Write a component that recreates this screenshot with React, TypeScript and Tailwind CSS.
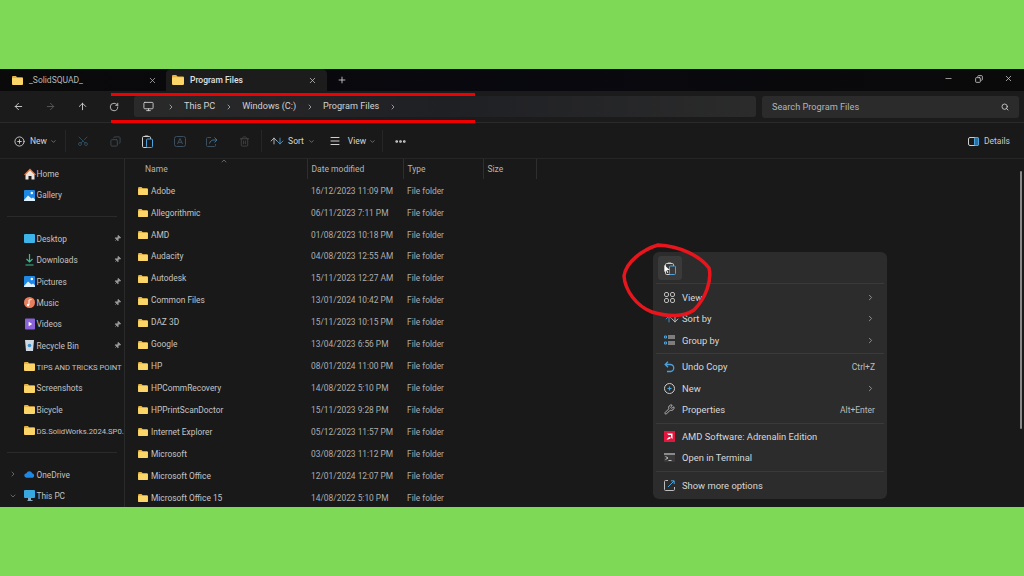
import {
  ArrowDown,
  ArrowLeft,
  ArrowRight,
  ArrowUp,
  ChevronDown,
  ChevronRight,
  ChevronUp,
  CirclePlus,
  Copy,
  Ellipsis,
  Menu,
  Minus,
  Monitor,
  Pin,
  Plus,
  RotateCw,
  Scissors,
  Search,
  Trash2,
  Wrench,
  X,
} from "lucide-react";
import type { ReactNode } from "react";

const files = [
  ["Adobe", "16/12/2023 11:09 PM"],
  ["Allegorithmic", "06/11/2023 7:11 PM"],
  ["AMD", "01/08/2023 10:18 PM"],
  ["Audacity", "04/08/2023 12:55 AM"],
  ["Autodesk", "15/11/2023 12:27 AM"],
  ["Common Files", "13/01/2024 10:42 PM"],
  ["DAZ 3D", "15/11/2023 10:15 PM"],
  ["Google", "13/04/2023 6:56 PM"],
  ["HP", "08/01/2024 11:00 PM"],
  ["HPCommRecovery", "14/08/2022 5:10 PM"],
  ["HPPrintScanDoctor", "15/11/2023 9:28 PM"],
  ["Internet Explorer", "05/12/2023 11:57 PM"],
  ["Microsoft", "03/08/2023 11:12 PM"],
  ["Microsoft Office", "12/01/2024 12:07 PM"],
  ["Microsoft Office 15", "14/08/2022 5:10 PM"],
];

function Folder({ className = "w-[11px] h-[9px]" }: { className?: string }) {
  return (
    <svg viewBox="0 0 11 9" className={`${className} shrink-0`}>
      <path d="M0 1.2C0 .5.5 0 1.2 0h2.6l1.4 1.3h4.6c.7 0 1.2.5 1.2 1.2v5.3c0 .7-.5 1.2-1.2 1.2H1.2C.5 9 0 8.500 0 7.800z" fill="#e8b23f" />
      <path d="M0 3c0-.6.5-1 1.200-1h8.600c.7 0 1.200.4 1.200 1v4.800c0 .7-.5 1.200-1.200 1.200H1.200C.5 9 0 8.500 0 7.800z" fill="#fbd568" />
    </svg>
  );
}

function Home() {
  return (
    <svg viewBox="0 0 12 12" className="w-[12px] h-[12px]">
      <path d="M1.500 6 6 1.500 10.500 6v5.500H7.500V8h-3v3.500h-3z" fill="#e9e4de" />
      <path d="M0 6.500 6 .5l6 6-1 .8-5-5-5 5z" fill="#e8743a" />
    </svg>
  );
}

function Picture() {
  return (
    <svg viewBox="0 0 11 11" className="w-[11px] h-[11px]">
      <rect width="11" height="11" rx="1" fill="#1e88e5" />
      <circle cx="7.800" cy="3" r="1.200" fill="#fff" />
      <path d="M0 10 4 5.500l3.500 3L9 7.500l2 2V11H0z" fill="#dff1ff" />
    </svg>
  );
}

function SideIcon({ name }: { name: string }) {
  if (name === "Home") return <Home />;
  if (name === "Gallery" || name === "Pictures") return <Picture />;
  if (name === "Desktop")
    return (
      <svg viewBox="0 0 11 9" className="w-[11px] h-[9px]">
        <rect width="11" height="9" rx="1" fill="#3cb4ea" />
      </svg>
    );
  if (name === "Downloads")
    return (
      <svg viewBox="0 0 11 12" className="w-[11px] h-[12px]" fill="none" stroke="#35c08f" strokeWidth="1.200">
        <path d="M5.500 0v7.500M2.500 5l3 3 3-3M1.500 11h8" />
      </svg>
    );
  if (name === "Music")
    return (
      <svg viewBox="0 0 11 11" className="w-[11px] h-[11px]">
        <circle cx="5.500" cy="5.500" r="5.500" fill="#e8805e" />
        <path d="M5 8V3l2.500-.5" stroke="#fff" fill="none" />
        <circle cx="4" cy="8" r="1.200" fill="#fff" />
      </svg>
    );
  if (name === "Videos")
    return (
      <svg viewBox="0 0 11 12" className="w-[10px] h-[12px]">
        <rect width="11" height="12" rx="1" fill="#8a63d8" />
        <path d="M4 3.500v5l4-2.500z" fill="#fff" />
      </svg>
    );
  if (name === "Recycle Bin")
    return (
      <svg viewBox="0 0 9 11" className="w-[9px] h-[11px]">
        <path d="M0 0h9l-1 11H1z" fill="#cfd8e0" />
        <circle cx="4.500" cy="5.500" r="1.800" fill="#3a8fd0" />
      </svg>
    );
  if (name === "OneDrive")
    return (
      <svg viewBox="0 0 12 7" className="w-[11px] h-[7px]">
        <path d="M3 7a2.500 2.500 0 0 1-.4-5A3.500 3.500 0 0 1 9 2.200 2.500 2.500 0 0 1 9.500 7z" fill="#1e88e5" />
      </svg>
    );
  if (name === "This PC")
    return (
      <svg viewBox="0 0 11 11" className="w-[11px] h-[11px]">
        <rect width="11" height="8" rx="1" fill="#38a9e0" />
        <path d="M4 8h3v2h1.500v1h-5v-1H4z" fill="#8aa9bc" />
      </svg>
    );
  return <Folder className="w-[11px] h-[9px]" />;
}

function PasteIcon({ bg }: { bg: string }) {
  return (
    <svg viewBox="0 0 11 13" className="h-[13px] w-[11px]" fill="none">
      <rect x=".5" y="1.500" width="8" height="11" rx="1.200" stroke="#d0d0d0" />
      <path d="M2.500 1.500a1 1 0 0 1 1-1h2a1 1 0 0 1 1 1v.5h-4z" fill="#d0d0d0" />
      <rect x="4.500" y="4" width="6" height="8.500" rx="1" fill={bg} stroke="#4aa3df" />
    </svg>
  );
}

function SideRow({ name, pinned, chevron, small }: { name: string; pinned?: boolean; chevron?: ReactNode; small?: boolean }) {
  return (
    <div className="relative flex h-[21.4px] items-center pl-[23px]">
      {chevron && <span className="absolute left-[9px] text-[#8a8a8a]">{chevron}</span>}
      <span className="flex w-[13px] shrink-0 items-center justify-center">
        <SideIcon name={name} />
      </span>
      <span className={`ml-[0.5px] flex-1 whitespace-nowrap pt-[1px] text-[#c2c2c2] ${small ? "text-[7.700px]" : "text-[8.300px]"}`}>{name}</span>
      {pinned && <Pin size={7} className="mr-[3.500px] rotate-45 fill-[#9a9a9a] text-[#9a9a9a]" />}
    </div>
  );
}

function Crumb({ text }: { text: string }) {
  return (
    <>
      <span className="text-[9.100px] text-[#d2d2d2]">{text}</span>
      <ChevronRight size={8} strokeWidth={2} className="text-[#d2d2d2]" />
    </>
  );
}

function ToolIcon({ children }: { children: ReactNode }) {
  return <span className="flex w-[32.200px] items-center justify-center">{children}</span>;
}

function MenuRow({ icon, label, hint, arrow }: { icon: ReactNode; label: string; hint?: string; arrow?: boolean }) {
  return (
    <div className="flex h-[21.500px] items-center pl-[11px] pr-[12px]">
      <span className="flex w-[18px] shrink-0 items-center">{icon}</span>
      <span className="flex-1 pt-[1px] text-[9.400px] text-[#d8d8d8]">{label}</span>
      {hint && <span className="pt-[1px] text-[8.500px] text-[#bcbcbc]">{hint}</span>}
      {arrow && <ChevronRight size={9} className="text-[#b0b0b0]" />}
    </div>
  );
}

function MenuLine() {
  return <div className="mx-[3px] my-[2px] h-px bg-[#3a3a3a]" />;
}

export default function App() {
  return (
    <div className="relative h-[576px] w-[1024px] overflow-hidden bg-[#7ed957] pt-[69px] font-['Roboto','Open_Sans',sans-serif]">
      <div className="flex h-[438px] flex-col bg-[#191919]">
        {/* tabs */}
        <div className="flex h-[22px] shrink-0 items-stretch bg-gradient-to-r from-[#0a0a0a] via-[#08080f] to-[#0a0a0a] pl-[2px]">
          <div className="flex w-[164px] items-center pl-[10px] pr-[9px]">
            <Folder />
            <span className="ml-[6px] flex-1 pt-[1px] text-[8.500px] text-[#b8b8b8]">_SolidSQUAD_</span>
            <X size={9} className="text-[#b5b5b5]" />
          </div>
          <div className="flex w-[161px] items-center rounded-t-[5px] bg-[#1c1c1c] pl-[6px] pr-[10px]">
            <Folder className="h-[10px] w-[12px]" />
            <span className="ml-[6px] flex-1 pt-[1px] text-[8.500px] font-medium text-[#e0e0e0]">Program Files</span>
            <X size={9} className="text-[#c5c5c5]" />
          </div>
          <div className="flex w-[30px] items-center justify-center">
            <Plus size={10} className="text-[#d5d5d5]" />
          </div>
          <div className="flex flex-1 items-start justify-end gap-[21.500px] pr-[11px] pt-[5px]">
            <Minus size={9} className="text-[#c0c0c0]" />
            <Copy size={8} strokeWidth={2.500} className="mt-[0.500px] -scale-x-100 text-[#d0d0d0]" />
            <X size={9} className="text-[#d0d0d0]" />
          </div>
        </div>

        {/* address bar */}
        <div className="flex h-[32px] shrink-0 items-center border-b border-[#2a2a2a] bg-[#1b1b1b] pl-[13px] pr-[5px]">
          <ArrowLeft size={11} className="text-[#d0d0d0]" />
          <ArrowRight size={11} className="ml-[21px] text-[#5a5a5a]" />
          <ArrowUp size={11} className="ml-[21px] text-[#d0d0d0]" />
          <RotateCw size={10} className="ml-[21px] text-[#d0d0d0]" />
          <div className="ml-[15px] flex h-[21px] w-[622px] items-center rounded-[3px] bg-gradient-to-r from-[#2a2a2a] via-[#1f2024] to-[#2b2b2b] pl-[9px]">
            <Monitor size={11} className="mr-[13px] text-[#cfcfcf]" />
            <ChevronRight size={8} strokeWidth={2} className="mr-[9px] text-[#d2d2d2]" />
            <div className="flex items-center gap-[9.500px] pt-[1px]">
              <Crumb text="This PC" />
              <Crumb text="Windows (C:)" />
              <Crumb text="Program Files" />
            </div>
          </div>
          <div className="ml-[6px] flex h-[22px] flex-1 items-center justify-between rounded-[3px] bg-[#2b2b2b] pl-[10px] pr-[10px]">
            <span className="pt-[1px] text-[9.200px] text-[#b4b4b4]">Search Program Files</span>
            <Search size={8} strokeWidth={2.500} className="text-[#d5d5d5]" />
          </div>
        </div>

        {/* toolbar */}
        <div className="flex h-[36px] shrink-0 items-center border-b border-[#262626] pl-[14px] pr-[14px] pt-[1px]">
          <CirclePlus size={11} className="text-[#cfcfcf]" />
          <span className="ml-[5px] text-[8.500px] text-[#d5d5d5]">New</span>
          <ChevronDown size={7} className="ml-[3px] text-[#a0a0a0]" />
          <div className="ml-[8px] h-[22px] w-px bg-[#262626]" />
          <div className="ml-[1px] flex">
            <ToolIcon><Scissors size={12} className="-rotate-90 text-[#2e4a5e]" /></ToolIcon>
            <ToolIcon><Copy size={11} className="-scale-x-100 text-[#3c4a54]" /></ToolIcon>
            <ToolIcon><PasteIcon bg="#191919" /></ToolIcon>
            <ToolIcon>
              <svg viewBox="0 0 12 11" className="h-[11px] w-[12px]" fill="none" stroke="#3c4f5e">
                <rect x=".5" y=".5" width="11" height="10" rx="2" />
                <path d="M3.500 8 6 2.500 8.500 8M4.300 6.300h3.400" />
              </svg>
            </ToolIcon>
            <ToolIcon>
              <svg viewBox="0 0 12 11" className="h-[11px] w-[12px]" fill="none" stroke="#3c4f5e">
                <path d="M5 1.500H1.500a1 1 0 0 0-1 1v7a1 1 0 0 0 1 1h7a1 1 0 0 0 1-1V8" />
                <path d="M3.500 7.500C4 5 6 4 8 4h3M8.500 1.500 11 4 8.500 6.500" stroke="#3f6f91" />
              </svg>
            </ToolIcon>
            <ToolIcon><Trash2 size={11} className="text-[#444444]" /></ToolIcon>
          </div>
          <div className="ml-[1px] h-[22px] w-px bg-[#262626]" />
          <span className="ml-[7px] flex">
            <ArrowUp size={10} className="text-[#cfcfcf]" />
            <ArrowDown size={10} className="-ml-[4px] text-[#4aa3df]" />
          </span>
          <span className="ml-[3px] text-[8.500px] text-[#d5d5d5]">Sort</span>
          <ChevronDown size={7} className="ml-[4px] text-[#a0a0a0]" />
          <Menu size={12} className="ml-[14px] text-[#cfcfcf]" />
          <span className="ml-[7px] text-[8.500px] text-[#d5d5d5]">View</span>
          <ChevronDown size={7} className="ml-[3px] text-[#a0a0a0]" />
          <div className="ml-[6px] h-[22px] w-px bg-[#262626]" />
          <Ellipsis size={13} strokeWidth={3} className="ml-[11px] text-[#d8d8d8]" />
          <div className="ml-auto flex items-center">
            <svg viewBox="0 0 11 9" className="h-[9px] w-[11px]" fill="none">
              <rect x=".5" y=".5" width="10" height="8" rx="1.500" stroke="#cfcfcf" />
              <rect x="6.500" y=".5" width="4" height="8" rx="1" fill="#2f6d9b" stroke="#4aa3df" />
            </svg>
            <span className="ml-[5px] text-[8.500px] text-[#c8c8c8]">Details</span>
          </div>
        </div>

        <div className="flex min-h-0 flex-1">
          {/* sidebar */}
          <div className="w-[125px] shrink-0 overflow-hidden border-r border-[#2a2a2a] pt-[4px]">
            <SideRow name="Home" />
            <SideRow name="Gallery" />
            <div className="mx-[7px] my-[10.500px] h-px bg-[#2a2a2a]" />
            <SideRow name="Desktop" pinned />
            <SideRow name="Downloads" pinned />
            <SideRow name="Pictures" pinned />
            <SideRow name="Music" pinned />
            <SideRow name="Videos" pinned />
            <SideRow name="Recycle Bin" pinned />
            <SideRow name="TIPS AND TRICKS POINT" small />
            <SideRow name="Screenshots" />
            <SideRow name="Bicycle" />
            <SideRow name="DS.SolidWorks.2024.SP0." small />
            <div className="mx-[7px] my-[10.500px] h-px bg-[#2a2a2a]" />
            <SideRow name="OneDrive" chevron={<ChevronRight size={8} />} />
            <SideRow name="This PC" chevron={<ChevronDown size={8} />} />
          </div>

          {/* file list */}
          <div className="relative min-w-0 flex-1 overflow-hidden">
            <ChevronUp size={8} className="absolute left-[95px] top-[-2px] text-[#8a8a8a]" />
            <div className="flex h-[20px] items-center text-[8.500px] text-[#b5b5b5]">
              <span className="h-full w-[182px] pl-[20px] leading-[20px]">Name</span>
              <span className="h-full w-[96px] border-l border-[#2e2e2e] pl-[3.500px] leading-[20px]">Date modified</span>
              <span className="h-full w-[80px] border-l border-[#2e2e2e] pl-[3.500px] leading-[20px]">Type</span>
              <span className="h-full w-[54px] border-x border-[#2e2e2e] pl-[3.500px] leading-[20px]">Size</span>
            </div>
            <div className="pt-[1px]">
              {files.map(([name, date]) => (
                <div key={name} className="flex h-[21.950px] items-center text-[8.400px] text-[#c4c4c4]">
                  <span className="flex w-[182px] items-center pl-[13px]">
                    <Folder className="h-[8px] w-[10px]" />
                    <span className="ml-[3px] whitespace-nowrap">{name}</span>
                  </span>
                  <span className="w-[96px] whitespace-nowrap pl-[4px] text-[#adadad]">{date}</span>
                  <span className="pl-[4px] text-[#adadad]">File folder</span>
                </div>
              ))}
            </div>
            <div className="absolute right-[2px] top-[12px] h-[258px] w-[2px] rounded bg-[#8a8a8a]" />
          </div>
        </div>
      </div>

      {/* context menu */}
      <div className="absolute left-[653px] top-[252px] h-[247px] w-[234px] rounded-[6px] bg-[#2c2c2c] pt-[4px]">
        <div className="ml-[5px] flex h-[24px] w-[24px] items-center justify-center rounded-[3px] bg-[#3a3a3a]">
          <span className="relative flex">
            <PasteIcon bg="#3a3a3a" />
            <svg viewBox="0 0 6 9" className="absolute left-[-1px] top-[3px] h-[8px] w-[6px]">
              <path d="M0 0v8l2-2 1.500 3 1-.5L3 5.500h3z" fill="#fff" />
            </svg>
          </span>
        </div>
        <div className="mx-[3px] mb-[2.500px] mt-[3px] h-px bg-[#3a3a3a]" />
        <MenuRow
          icon={
            <svg viewBox="0 0 11 11" className="h-[11px] w-[11px]" fill="none" stroke="#bdbdbd">
              <rect x=".5" y=".5" width="4" height="4" rx="1.500" />
              <rect x="6.500" y=".5" width="4" height="4" rx="1.500" />
              <rect x=".5" y="6.500" width="4" height="4" rx="1.500" />
              <rect x="6.500" y="6.500" width="4" height="4" rx="1.500" />
            </svg>
          }
          label="View"
          arrow
        />
        <MenuRow
          icon={
            <span className="flex">
              <ArrowUp size={10} className="text-[#4aa3df]" />
              <ArrowDown size={10} className="-ml-[4px] text-[#cfcfcf]" />
            </span>
          }
          label="Sort by"
          arrow
        />
        <MenuRow
          icon={
            <svg viewBox="0 0 11 10" className="h-[10px] w-[11px]" fill="none" stroke="#4aa3df">
              <path d="M.5 1h2v2h-2zM.5 7h2v2h-2z" />
              <path d="M4 1h7M4 3h7M4 7h7M4 9h7" stroke="#cfcfcf" />
            </svg>
          }
          label="Group by"
          arrow
        />
        <MenuLine />
        <MenuRow
          icon={
            <svg viewBox="0 0 11 12" className="h-[12px] w-[11px]" fill="none" stroke="#4aa3df" strokeWidth="1.300">
              <path d="M4 .8 1.200 3.500 4 6.200M1.500 3.500h4.500a3.500 3.500 0 0 1 .5 7H3" />
            </svg>
          }
          label="Undo Copy"
          hint="Ctrl+Z"
        />
        <MenuRow
          icon={
            <svg viewBox="0 0 11 11" className="h-[11px] w-[11px]" fill="none">
              <circle cx="5.500" cy="5.500" r="5" stroke="#cfcfcf" />
              <path d="M3.500 5.500h4M5.500 3.500v4" stroke="#4aa3df" strokeWidth="1.200" />
            </svg>
          }
          label="New"
          arrow
        />
        <MenuRow icon={<Wrench size={11} className="text-[#bdbdbd]" />} label="Properties" hint="Alt+Enter" />
        <MenuLine />
        <MenuRow
          icon={
            <svg viewBox="0 0 11 11" className="h-[11px] w-[11px]">
              <rect width="11" height="11" fill="#e3173e" />
              <path d="M3 2.500h5.500V8L7 6.500V4H4.500zM2.500 8.500 5 6h1.500v1.500L4 8.500z" fill="#fff" />
            </svg>
          }
          label="AMD Software: Adrenalin Edition"
        />
        <MenuRow
          icon={
            <svg viewBox="0 0 11 9" className="h-[9px] w-[11px]" fill="none">
              <rect width="11" height="9" rx="1" fill="#3a3a3a" />
              <rect width="11" height="2" fill="#8a8a8a" />
              <path d="M1.500 3.500 4 5 1.500 6.500M4.500 7.500h3" stroke="#e0e0e0" strokeWidth=".8" />
            </svg>
          }
          label="Open in Terminal"
        />
        <MenuLine />
        <div className="mt-[3px]">
          <MenuRow
            icon={
              <svg viewBox="0 0 11 11" className="h-[11px] w-[11px]" fill="none" stroke="#bdbdbd">
                <path d="M4 .5H1.500a1 1 0 0 0-1 1v8a1 1 0 0 0 1 1h8a1 1 0 0 0 1-1V7" />
                <path d="M4 7l6-6M7 .8h3.200V4" stroke="#4aa3df" />
              </svg>
            }
            label="Show more options"
          />
        </div>
      </div>

      {/* red annotations */}
      <div className="absolute left-[111px] top-[93px] h-[2.500px] w-[364px] bg-[#f00000]" />
      <div className="absolute left-[111px] top-[120px] h-[2.500px] w-[364px] bg-[#f00000]" />
      <svg viewBox="0 0 1024 576" className="pointer-events-none absolute left-0 top-0 h-[576px] w-[1024px]" fill="none">
        <path
          d="M658 245C680 246 700 256 709 268C712 280 706 298 694 310C684 317 668 317 652 312C636 306 625 290 624 276C626 262 642 250 658 245Z"
          stroke="#e8151d"
          strokeWidth="3.500"
          strokeLinecap="round"
        />
      </svg>
    </div>
  );
}
